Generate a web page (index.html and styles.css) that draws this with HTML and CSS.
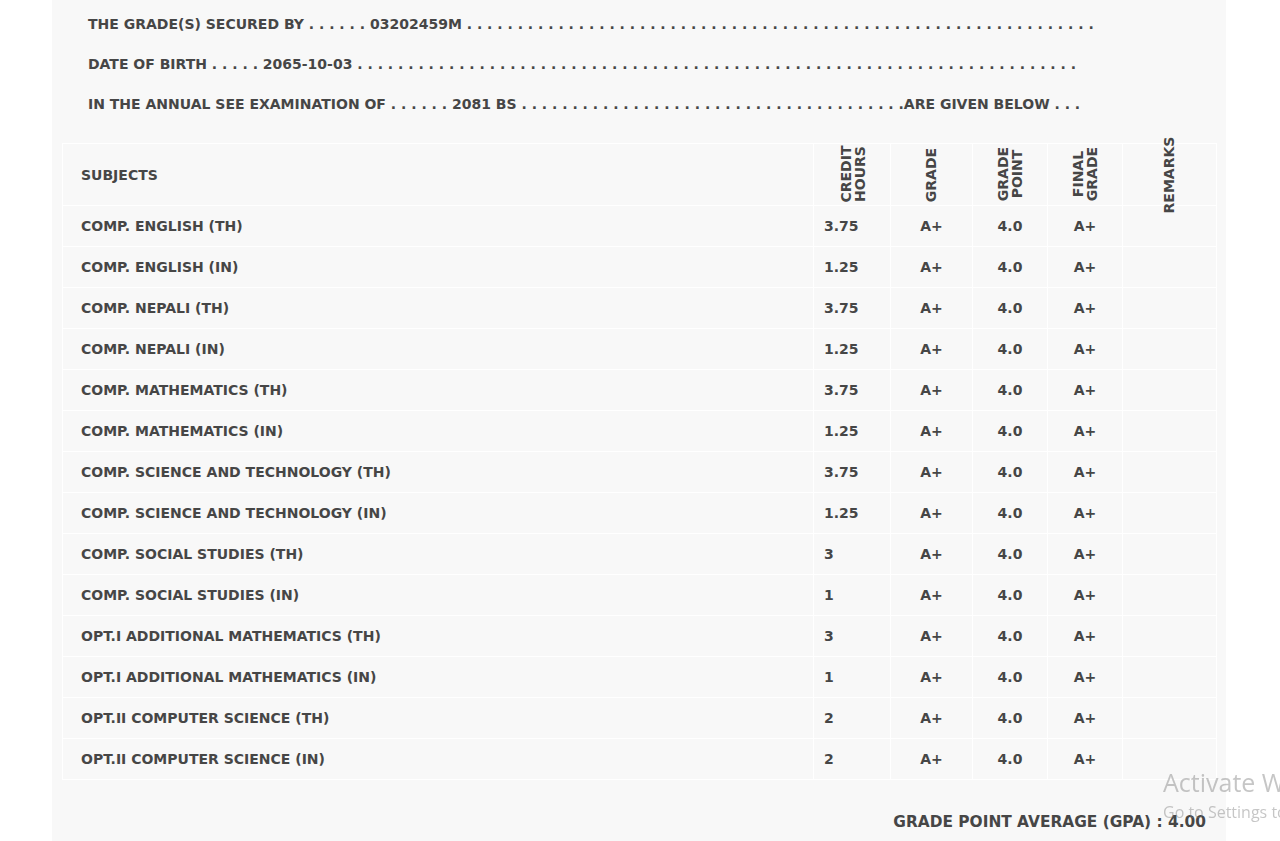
FILE: index.html
```html
<!DOCTYPE html>
<html lang="en">
<head>
<meta charset="utf-8">
<title>Grade Sheet</title>
<link rel="stylesheet" href="styles.css">
</head>
<body>
<div class="panel">
  <div class="info">
    <p class="info-line">THE GRADE(S) SECURED BY . . . . . . 03202459M . . . . . . . . . . . . . . . . . . . . . . . . . . . . . . . . . . . . . . . . . . . . . . . . . . . . . . . . . . . . . .</p>
    <p class="info-line">DATE OF BIRTH . . . . . 2065-10-03 . . . . . . . . . . . . . . . . . . . . . . . . . . . . . . . . . . . . . . . . . . . . . . . . . . . . . . . . . . . . . . . . . . . . . . .</p>
    <p class="info-line">IN THE ANNUAL SEE EXAMINATION OF . . . . . . 2081 BS . . . . . . . . . . . . . . . . . . . . . . . . . . . . . . . . . . . . . .ARE GIVEN BELOW . . .</p>
  </div>
  <table class="grades">
    <colgroup>
      <col class="c-subject">
      <col class="c-credit">
      <col class="c-grade">
      <col class="c-point">
      <col class="c-final">
      <col class="c-remarks">
    </colgroup>
    <thead>
      <tr class="head-row">
        <th class="th-subject">SUBJECTS</th>
        <th class="th-rot"><span class="rot">CREDIT<br>HOURS</span></th>
        <th class="th-rot"><span class="rot">GRADE</span></th>
        <th class="th-rot"><span class="rot">GRADE<br>POINT</span></th>
        <th class="th-rot"><span class="rot">FINAL<br>GRADE</span></th>
        <th class="th-rot"><span class="rot">REMARKS</span></th>
      </tr>
    </thead>
    <tbody>
      <tr><td>COMP. ENGLISH (TH)</td><td class="credit">3.75</td><td class="mid">A+</td><td class="mid">4.0</td><td class="mid">A+</td><td></td></tr>
      <tr><td>COMP. ENGLISH (IN)</td><td class="credit">1.25</td><td class="mid">A+</td><td class="mid">4.0</td><td class="mid">A+</td><td></td></tr>
      <tr><td>COMP. NEPALI (TH)</td><td class="credit">3.75</td><td class="mid">A+</td><td class="mid">4.0</td><td class="mid">A+</td><td></td></tr>
      <tr><td>COMP. NEPALI (IN)</td><td class="credit">1.25</td><td class="mid">A+</td><td class="mid">4.0</td><td class="mid">A+</td><td></td></tr>
      <tr><td>COMP. MATHEMATICS (TH)</td><td class="credit">3.75</td><td class="mid">A+</td><td class="mid">4.0</td><td class="mid">A+</td><td></td></tr>
      <tr><td>COMP. MATHEMATICS (IN)</td><td class="credit">1.25</td><td class="mid">A+</td><td class="mid">4.0</td><td class="mid">A+</td><td></td></tr>
      <tr><td>COMP. SCIENCE AND TECHNOLOGY (TH)</td><td class="credit">3.75</td><td class="mid">A+</td><td class="mid">4.0</td><td class="mid">A+</td><td></td></tr>
      <tr><td>COMP. SCIENCE AND TECHNOLOGY (IN)</td><td class="credit">1.25</td><td class="mid">A+</td><td class="mid">4.0</td><td class="mid">A+</td><td></td></tr>
      <tr><td>COMP. SOCIAL STUDIES (TH)</td><td class="credit">3</td><td class="mid">A+</td><td class="mid">4.0</td><td class="mid">A+</td><td></td></tr>
      <tr><td>COMP. SOCIAL STUDIES (IN)</td><td class="credit">1</td><td class="mid">A+</td><td class="mid">4.0</td><td class="mid">A+</td><td></td></tr>
      <tr><td>OPT.I ADDITIONAL MATHEMATICS (TH)</td><td class="credit">3</td><td class="mid">A+</td><td class="mid">4.0</td><td class="mid">A+</td><td></td></tr>
      <tr><td>OPT.I ADDITIONAL MATHEMATICS (IN)</td><td class="credit">1</td><td class="mid">A+</td><td class="mid">4.0</td><td class="mid">A+</td><td></td></tr>
      <tr><td>OPT.II COMPUTER SCIENCE (TH)</td><td class="credit">2</td><td class="mid">A+</td><td class="mid">4.0</td><td class="mid">A+</td><td></td></tr>
      <tr><td>OPT.II COMPUTER SCIENCE (IN)</td><td class="credit">2</td><td class="mid">A+</td><td class="mid">4.0</td><td class="mid">A+</td><td></td></tr>
    </tbody>
  </table>
  <p class="gpa">GRADE POINT AVERAGE (GPA) : 4.00</p>
</div>
<div class="activate">
  <div class="activate-title">Activate Windows</div>
  <div class="activate-sub">Go to Settings to activate Windows.</div>
</div>
</body>
</html>
```
FILE: styles.css
```css
html, body {
  margin: 0;
  padding: 0;
  background: #ffffff;
}

body {
  font-family: "DejaVu Sans", "Liberation Sans", sans-serif;
  font-weight: 700;
  font-size: 14px;
  color: #464646;
  overflow: hidden;
}

.panel {
  margin-left: 52px;
  width: 1174px;
  box-sizing: border-box;
  padding: 4px 10px 20px 10px;
  background: #f8f8f8;
  min-height: 841px;
}

.info {
  padding-left: 26px;
  margin-bottom: 19px;
}

.info-line {
  margin: 0;
  height: 40px;
  line-height: 40px;
  white-space: nowrap;
}

.grades {
  width: 1154px;
  border-collapse: collapse;
  table-layout: fixed;
}

.c-subject { width: 751px; }
.c-credit { width: 77px; }
.c-grade { width: 82px; }
.c-point { width: 75px; }
.c-final { width: 75px; }
.c-remarks { width: 94px; }

.grades th,
.grades td {
  border: 1px solid #ffffff;
  padding: 0 0 0 18px;
  text-align: left;
  vertical-align: middle;
  font-weight: 700;
}

.head-row {
  height: 62px;
}

.grades th.th-rot {
  padding: 0;
  text-align: center;
}

.rot {
  display: inline-block;
  transform: rotate(-90deg);
  line-height: 14px;
  text-align: center;
  white-space: nowrap;
}

.grades tbody tr {
  height: 41px;
}

.grades td.credit {
  padding-left: 10px;
}

.grades td.mid {
  padding: 0;
  text-align: center;
}

.gpa {
  margin: 33px 0 0 0;
  padding-right: 10px;
  text-align: right;
  font-size: 15.4px;
  line-height: 18px;
}

.activate {
  position: fixed;
  left: 1163px;
  top: 764px;
  white-space: nowrap;
  font-family: "Open Sans", "Noto Sans", sans-serif;
  font-weight: 400;
  color: rgba(120, 120, 120, 0.42);
}

.activate-title {
  font-size: 25px;
  line-height: 36px;
}

.activate-sub {
  font-size: 16px;
  line-height: 20px;
  margin-top: 2px;
}
```
